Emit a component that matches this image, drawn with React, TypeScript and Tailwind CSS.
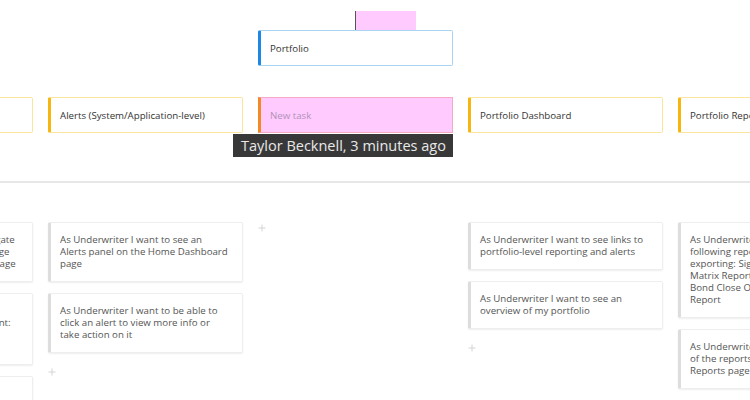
const stories: string[][] = [
  [
    "As an Underwriter I want to navigate\nto other pages from the Homepage\nDashboard using a link on each Page",
    "As Underwriter I want to see\nkey information for every applicant:\nBond Amount, Premium,\nStatus",
    "As Underwriter I want",
  ],
  [
    "As Underwriter I want to see an\nAlerts panel on the Home Dashboard\npage",
    "As Underwriter I want to be able to\nclick an alert to view more info or\ntake action on it",
  ],
  [],
  [
    "As Underwriter I want to see links to\nportfolio-level reporting and alerts",
    "As Underwriter I want to see an\noverview of my portfolio",
  ],
  [
    "As Underwriter I want the\nfollowing reports available for\nexporting: Signature\nMatrix Report, Surety\nBond Close Out Summary\nReport",
    "As Underwriter I want to see a list\nof the reports available on the\nReports page",
  ],
];

const tasks = ["Home Dashboard", "Alerts (System/Application-level)", "", "Portfolio Dashboard", "Portfolio Reports"];

function Plus() {
  return (
    <svg width="8" height="8" viewBox="0 0 8 8" className="block">
      <path d="M4 0.5V7.5M0.5 4H7.5" stroke="#d4d4d4" strokeWidth="1" />
    </svg>
  );
}

function TaskCard({ title }: { title: string }) {
  return (
    <div className="w-[195px] h-[36px] shrink-0 flex items-center bg-white border border-[#fbe49c] border-l-[3px] border-l-[#f6b60d] rounded-[2px] pl-[9px] pt-[2px] text-[9.7px] text-[#333]">
      {title}
    </div>
  );
}

function StoryCard({ text }: { text: string }) {
  return (
    <div className="w-[195px] bg-white border border-[#eeeeee] border-l-[3px] border-l-[#dddddd] rounded-[2px] pl-[9px] pr-[6px] py-[11px] text-[9.7px] leading-[12px] text-[#555] whitespace-pre shadow-[0_1px_2px_rgba(0,0,0,0.07)]">
      {text}
    </div>
  );
}

export default function App() {
  return (
    <div className="relative w-[750px] h-[400px] overflow-hidden bg-white font-['Open_Sans',sans-serif]">
      <div className="ml-[-162px] pt-[30px]">
        {/* Activities */}
        <div className="flex gap-[15px]">
          <div className="w-[195px] shrink-0" />
          <div className="w-[195px] shrink-0" />
          <div className="w-[195px] h-[36px] shrink-0 flex items-center bg-white border border-[#a9d5f3] border-l-[3px] border-l-[#1a88e4] rounded-[2px] pl-[9px] pt-[2px] text-[9.7px] text-[#333]">
            Portfolio
          </div>
        </div>

        {/* Tasks */}
        <div className="flex gap-[15px] mt-[31px]">
          {tasks.map((t, i) =>
            i === 2 ? (
              <div
                key={i}
                className="w-[195px] h-[36px] shrink-0 flex items-center bg-[#ffcbff] border border-[#f4a9c4] border-l-[3px] border-l-[#f28a22] pl-[9px] pt-[2px] text-[9.7px] text-[#b291b8]"
              >
                New task
              </div>
            ) : (
              <TaskCard key={i} title={t} />
            )
          )}
        </div>

        <div className="mt-[48px] h-[2px] w-[1100px] bg-[#e7e7e7]" />

        {/* Stories */}
        <div className="flex gap-[15px] mt-[39px] items-start">
          {stories.map((col, i) => (
            <div key={i} className="w-[195px] shrink-0 flex flex-col gap-[11px]">
              {col.map((s, j) => (
                <StoryCard key={j} text={s} />
              ))}
              {i !== 0 && i !== 4 && (
                <div className={col.length === 0 ? "mt-[2px]" : "mt-[4px]"}>
                  <Plus />
                </div>
              )}
            </div>
          ))}
        </div>
      </div>

      {/* dragged card ghost */}
      <div className="absolute left-[355px] top-[11px] w-[61px] h-[19px] bg-[#ffcbff] border-l border-l-[#555]" />

      {/* tooltip */}
      <div className="absolute left-[233px] top-[134px] w-[220px] h-[23px] bg-[#383838] flex items-center pl-[8px] text-[14.5px] text-[#e9e9e9] whitespace-nowrap">
        Taylor Becknell, 3 minutes ago
      </div>
    </div>
  );
}
